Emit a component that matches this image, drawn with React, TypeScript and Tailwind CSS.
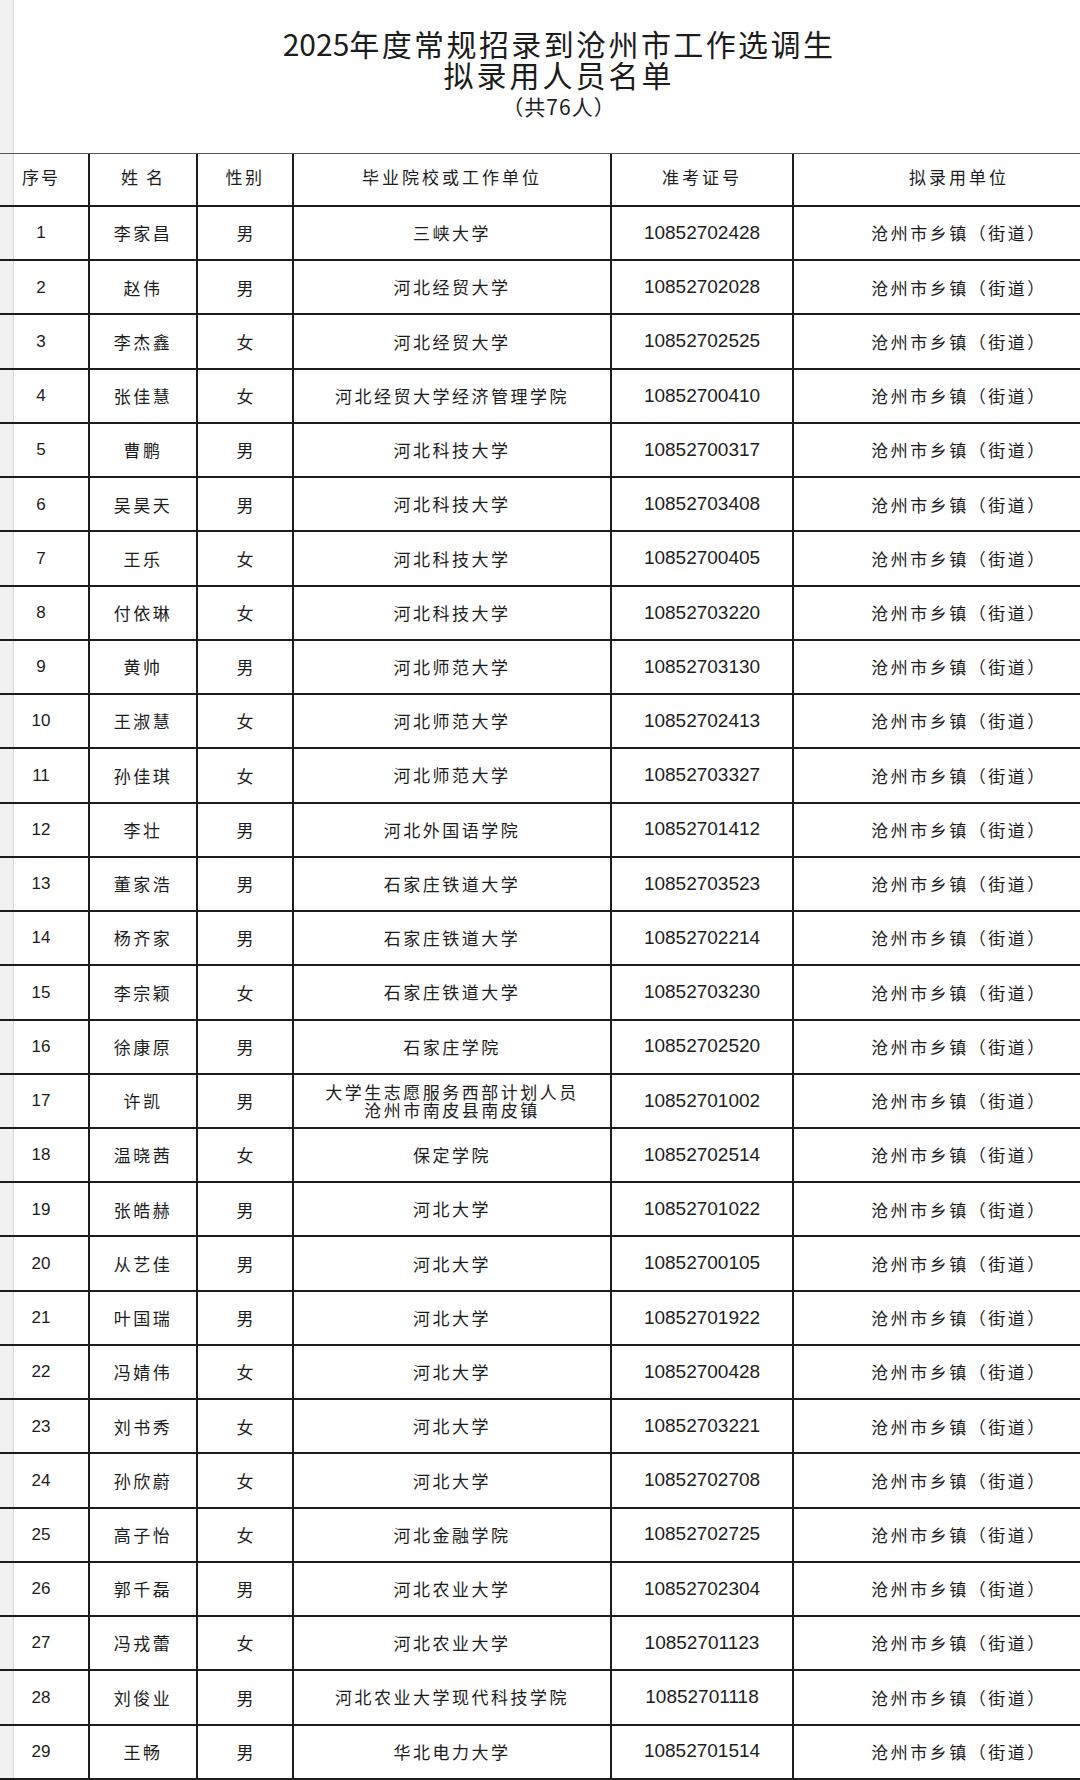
import React from "react";

type Row = {
  name: string;
  sex: string;
  school: string[];
  id: string;
};

const rows: Row[] = [
  { name: "李家昌", sex: "男", school: ["三峡大学"], id: "10852702428" },
  { name: "赵伟", sex: "男", school: ["河北经贸大学"], id: "10852702028" },
  { name: "李杰鑫", sex: "女", school: ["河北经贸大学"], id: "10852702525" },
  { name: "张佳慧", sex: "女", school: ["河北经贸大学经济管理学院"], id: "10852700410" },
  { name: "曹鹏", sex: "男", school: ["河北科技大学"], id: "10852700317" },
  { name: "吴昊天", sex: "男", school: ["河北科技大学"], id: "10852703408" },
  { name: "王乐", sex: "女", school: ["河北科技大学"], id: "10852700405" },
  { name: "付依琳", sex: "女", school: ["河北科技大学"], id: "10852703220" },
  { name: "黄帅", sex: "男", school: ["河北师范大学"], id: "10852703130" },
  { name: "王淑慧", sex: "女", school: ["河北师范大学"], id: "10852702413" },
  { name: "孙佳琪", sex: "女", school: ["河北师范大学"], id: "10852703327" },
  { name: "李壮", sex: "男", school: ["河北外国语学院"], id: "10852701412" },
  { name: "董家浩", sex: "男", school: ["石家庄铁道大学"], id: "10852703523" },
  { name: "杨齐家", sex: "男", school: ["石家庄铁道大学"], id: "10852702214" },
  { name: "李宗颖", sex: "女", school: ["石家庄铁道大学"], id: "10852703230" },
  { name: "徐康原", sex: "男", school: ["石家庄学院"], id: "10852702520" },
  {
    name: "许凯",
    sex: "男",
    school: ["大学生志愿服务西部计划人员", "沧州市南皮县南皮镇"],
    id: "10852701002",
  },
  { name: "温晓茜", sex: "女", school: ["保定学院"], id: "10852702514" },
  { name: "张皓赫", sex: "男", school: ["河北大学"], id: "10852701022" },
  { name: "从艺佳", sex: "男", school: ["河北大学"], id: "10852700105" },
  { name: "叶国瑞", sex: "男", school: ["河北大学"], id: "10852701922" },
  { name: "冯婧伟", sex: "女", school: ["河北大学"], id: "10852700428" },
  { name: "刘书秀", sex: "女", school: ["河北大学"], id: "10852703221" },
  { name: "孙欣蔚", sex: "女", school: ["河北大学"], id: "10852702708" },
  { name: "高子怡", sex: "女", school: ["河北金融学院"], id: "10852702725" },
  { name: "郭千磊", sex: "男", school: ["河北农业大学"], id: "10852702304" },
  { name: "冯戎蕾", sex: "女", school: ["河北农业大学"], id: "10852701123" },
  { name: "刘俊业", sex: "男", school: ["河北农业大学现代科技学院"], id: "10852701118" },
  { name: "王畅", sex: "男", school: ["华北电力大学"], id: "10852701514" },
];

const cjk = "font-['Noto_Sans_CJK_SC',_sans-serif]";
const digits = "font-['Liberation_Sans',_'Noto_Sans_CJK_SC',_sans-serif]";

// 表格单元格：右侧粗竖线
const cell = "flex items-center justify-center border-r-2 border-[#1c1c1c] shrink-0";

export default function App() {
  return (
    <div className={`w-[1080px] h-[1780px] overflow-hidden bg-white text-[#1c1c1c] ${cjk}`}>
      {/* 标题区 */}
      <div className="flex h-[153px]">
        <div className="w-[14px] shrink-0 bg-[#f1f1f1] border-r border-[#d6d6d6]" />
        <div className="flex-1 flex flex-col items-center pt-[28px] pl-[24px]">
          <div className="text-[30px] leading-[30px] tracking-[2.4px]">
            <span className="tracking-[0px]">2025</span>年度常规招录到沧州市工作选调生
          </div>
          <div className="text-[30px] leading-[33px] tracking-[3px]">拟录用人员名单</div>
          <div className="text-[21px] leading-[30px] tracking-[1px]">（共76人）</div>
        </div>
      </div>

      {/* 表头 */}
      <div className="flex h-[54px] w-[1126px] border-t border-[#555555] border-b-2 border-b-[#1c1c1c]">
        <div className="w-[14px] shrink-0 bg-[#f1f1f1] border-r border-[#d6d6d6]" />
        <div className={`${cell} w-[76px] pr-[20px] pb-[6px] text-[17px] tracking-[2px]`}>序号</div>
        <div className={`${cell} w-[108px] pb-[6px] text-[17px] tracking-[2px]`}>姓 名</div>
        <div className={`${cell} w-[96px] pb-[6px] text-[17px] tracking-[2.5px]`}>性别</div>
        <div className={`${cell} w-[318px] pb-[6px] text-[17px] tracking-[3px]`}>毕业院校或工作单位</div>
        <div className={`${cell} w-[182px] pb-[6px] text-[17px] tracking-[3px]`}>准考证号</div>
        <div className={`${cell} w-[332px] border-r-0 pb-[6px] text-[17px] tracking-[3px]`}>拟录用单位</div>
      </div>

      {/* 表体 */}
      {rows.map((r, i) => (
        <div key={r.id} className="flex h-[54.24px] w-[1126px] border-b-2 border-[#1c1c1c]">
          <div className="w-[14px] shrink-0 bg-[#f1f1f1] border-r border-[#d6d6d6]" />
          <div className={`${cell} w-[76px] pr-[20px] text-[17px] ${digits}`}>{i + 1}</div>
          <div className={`${cell} w-[108px] text-[17px] tracking-[2.5px]`}>{r.name}</div>
          <div className={`${cell} w-[96px] text-[17px]`}>{r.sex}</div>
          <div className={`${cell} w-[318px] flex-col text-[17px] tracking-[2.5px]`}>
            {r.school.map((s) => (
              <span key={s} className={r.school.length > 1 ? "leading-[18px]" : "leading-[24px]"}>
                {s}
              </span>
            ))}
          </div>
          <div className={`${cell} w-[182px] text-[19px] ${digits}`}>{r.id}</div>
          <div className={`${cell} w-[332px] border-r-0 text-[17px] tracking-[2.5px]`}>
            沧州市乡镇（街道）
          </div>
        </div>
      ))}
    </div>
  );
}
